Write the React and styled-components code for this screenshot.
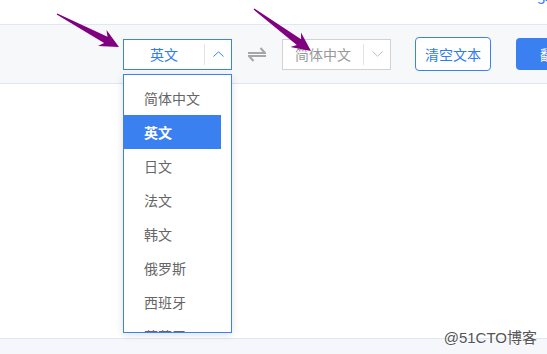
import React from 'react';
import styled, { createGlobalStyle } from 'styled-components';

const GlobalStyle = createGlobalStyle`
  body {
    margin: 0;
    background: #fff;
    font-family: "Noto Sans CJK SC", "Noto Sans", sans-serif;
  }
`;

const Page = styled.div`
  position: relative;
  width: 547px;
  height: 354px;
  overflow: hidden;
  background: #f5f7fa;
`;

const Header = styled.div`
  height: 24px;
  background: #fff;
  border-bottom: 1px solid #dde8f6;
  display: flex;
  justify-content: flex-end;
  overflow: hidden;
`;

const Counter = styled.span`
  color: #2f7bf0;
  font-size: 14px;
  line-height: 14px;
  margin-top: -9px;
  margin-right: -6px;
`;

const Toolbar = styled.div`
  height: 58px;
  background: #f7f8fa;
  border-bottom: 1px solid #dce6f4;
  display: flex;
  align-items: center;
  padding-left: 123px;
`;

const SelectWrap = styled.div`
  position: relative;
  flex-shrink: 0;
`;

const Select = styled.div`
  box-sizing: border-box;
  width: 109px;
  height: 31px;
  display: flex;
  align-items: center;
  background: #fff;
  border: 1px solid ${(p) => (p.$open ? '#3a82f4' : '#d2d2d2')};
`;

const SelectLabel = styled.span`
  flex: 1;
  text-align: center;
  font-size: 14px;
  line-height: 29px;
  color: ${(p) => (p.$open ? '#2f7bf0' : '#999')};
`;

const Caret = styled.span`
  width: 26px;
  height: 21px;
  border-left: 1px solid #e3e3e3;
  display: flex;
  align-items: center;
  justify-content: center;
`;

const Swap = styled.span`
  display: flex;
  margin: 0 16px;
  flex-shrink: 0;
`;

const OutlineButton = styled.button`
  box-sizing: border-box;
  flex-shrink: 0;
  width: 76px;
  height: 34px;
  margin-left: 24px;
  border: 1px solid #3a82f4;
  border-radius: 4px;
  background: #fff;
  color: #2f7bf0;
  font-family: inherit;
  font-size: 14px;
  padding: 0;
`;

const PrimaryButton = styled.button`
  box-sizing: border-box;
  flex-shrink: 0;
  width: 76px;
  height: 32px;
  margin-left: 25px;
  border: none;
  border-radius: 4px;
  background: #3b80f0;
  color: #fff;
  font-family: inherit;
  font-size: 14px;
  padding: 0;
`;

const Dropdown = styled.div`
  position: absolute;
  top: 35px;
  left: 0;
  box-sizing: border-box;
  width: 109px;
  height: 259px;
  background: #fff;
  border: 1px solid #3a82f4;
  box-shadow: 0 2px 8px rgba(0, 0, 0, 0.12);
  overflow: hidden;
  padding: 6px 10px 0 0;
  z-index: 2;
`;

const Option = styled.div`
  height: 34px;
  line-height: 34px;
  padding-left: 20px;
  font-size: 14px;
  color: ${(p) => (p.$active ? '#fff' : '#666')};
  background: ${(p) => (p.$active ? '#3b80f0' : 'transparent')};
  font-weight: ${(p) => (p.$active ? 700 : 400)};
`;

const Content = styled.div`
  height: 254px;
  background: #fff;
  border-bottom: 1px solid #dce8f8;
`;

const Watermark = styled.span`
  position: absolute;
  right: 10px;
  bottom: 7px;
  font-size: 15px;
  color: #555;
  text-shadow: 0 0 2px #fff, 0 0 2px #fff;
  font-family: "Liberation Sans", "Noto Sans CJK SC", sans-serif;
`;

const Overlay = styled.svg`
  position: absolute;
  left: 0;
  top: 0;
  pointer-events: none;
  z-index: 3;
`;

const languages = ['简体中文', '英文', '日文', '法文', '韩文', '俄罗斯', '西班牙', '葡萄牙', '德文'];

function arrowPoints([tx, ty], [px, py]) {
  const dx = px - tx;
  const dy = py - ty;
  const len = Math.hypot(dx, dy);
  const ux = dx / len;
  const uy = dy / len;
  const nx = -uy;
  const ny = ux;
  const bx = px - ux * 19;
  const by = py - uy * 19;
  const nb = px - ux * 15;
  const nby = py - uy * 15;
  const pt = (x, y) => `${x.toFixed(1)},${y.toFixed(1)}`;
  return [
    pt(tx + nx * 0.7, ty + ny * 0.7),
    pt(nb + nx * 3.6, nby + ny * 3.6),
    pt(bx + nx * 9, by + ny * 9),
    pt(px, py),
    pt(bx - nx * 9, by - ny * 9),
    pt(nb - nx * 3.6, nby - ny * 3.6),
    pt(tx - nx * 0.7, ty - ny * 0.7),
  ].join(' ');
}

const Chevron = ({ up, color }) => (
  <svg width="11" height="6" viewBox="0 0 11 6">
    <polyline
      points={up ? '0.5,5.5 5.5,0.8 10.5,5.5' : '0.5,0.5 5.5,5.2 10.5,0.5'}
      fill="none"
      stroke={color}
      strokeWidth="1"
    />
  </svg>
);

const App = () => (
  <>
    <GlobalStyle />
    <Page>
      <Header>
        <Counter>34</Counter>
      </Header>
      <Toolbar>
        <SelectWrap>
          <Select $open>
            <SelectLabel $open>英文</SelectLabel>
            <Caret>
              <Chevron up color="#3a82f4" />
            </Caret>
          </Select>
          <Dropdown>
            {languages.map((lang) => (
              <Option key={lang} $active={lang === '英文'}>
                {lang}
              </Option>
            ))}
          </Dropdown>
        </SelectWrap>
        <Swap>
          <svg width="18" height="15" viewBox="0 0 18 15">
            <g fill="none" stroke="#a6a6a6" strokeWidth="2">
              <path d="M0 6 H17 L12.5 1" />
              <path d="M18 9 H1 L5.5 14" />
            </g>
          </svg>
        </Swap>
        <SelectWrap>
          <Select>
            <SelectLabel>简体中文</SelectLabel>
            <Caret>
              <Chevron color="#bdbdbd" />
            </Caret>
          </Select>
        </SelectWrap>
        <OutlineButton>清空文本</OutlineButton>
        <PrimaryButton>翻译</PrimaryButton>
      </Toolbar>
      <Content />
      <Watermark>@51CTO博客</Watermark>
      <Overlay width="547" height="354">
        <polygon points={arrowPoints([57, 14], [119, 47])} fill="#800080" />
        <polygon points={arrowPoints([254, 9], [311, 51])} fill="#800080" />
      </Overlay>
    </Page>
  </>
);

export default App;
